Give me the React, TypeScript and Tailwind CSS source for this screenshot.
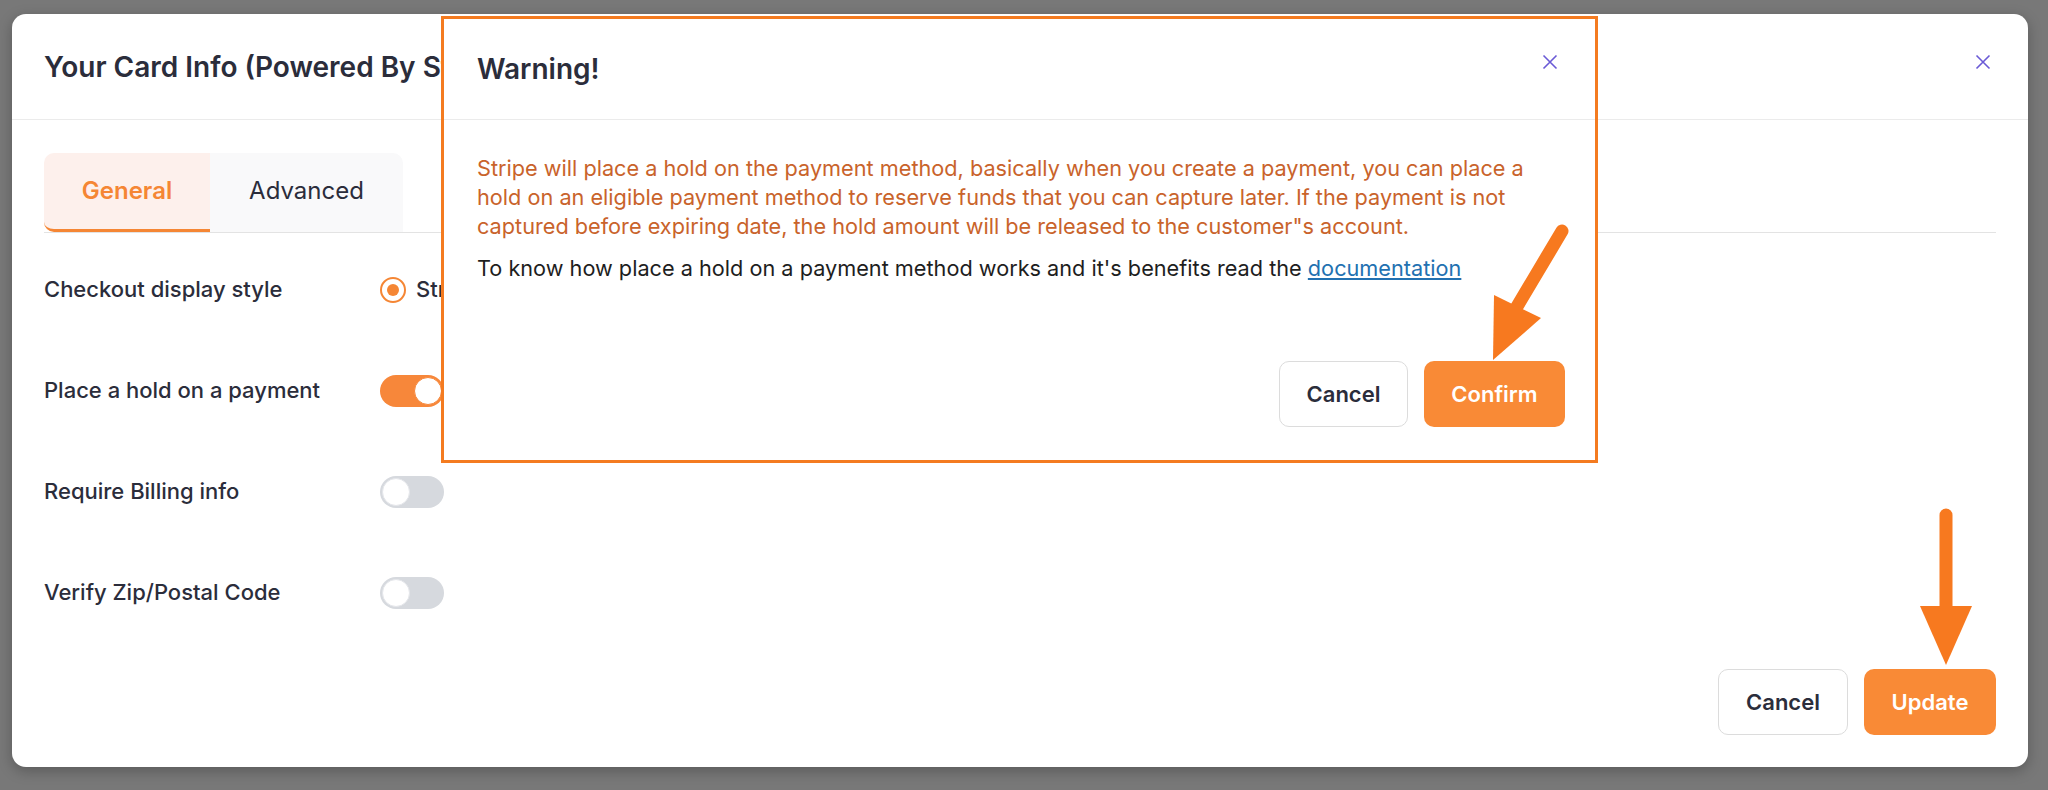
import React from 'react';

const CloseIcon = () => (
  <svg width="16" height="16" viewBox="0 0 16 16" fill="none">
    <path d="M1.5 1.5L14.5 14.5M14.5 1.5L1.5 14.5" stroke="#6a5ad6" strokeWidth="1.6" />
  </svg>
);

const Toggle = ({ on }: { on?: boolean }) => (
  <div
    className={`flex h-[32px] w-[64px] items-center rounded-full px-[2px] ${
      on ? 'justify-end bg-[#f7873a]' : 'justify-start bg-[#d6d9de]'
    }`}
  >
    <span
      className={`block h-[28px] w-[28px] rounded-full border bg-white ${
        on ? 'border-[#f7873a]' : 'border-[#e4e6ea]'
      }`}
    />
  </div>
);

const SettingRow = ({ label, children }: { label: string; children: React.ReactNode }) => (
  <div className="flex h-[101px] items-center">
    <div className="w-[336px] text-[22px] font-medium text-[#2b2d3b]">{label}</div>
    <div className="flex items-center">{children}</div>
  </div>
);

const WarningDialog = () => (
  <div className="absolute left-[441px] top-[16px] flex h-[447px] w-[1157px] flex-col border-[3px] border-[#f47b20] bg-white">
    {/* Header */}
    <div className="flex h-[101px] items-center justify-between border-b border-[#ebebeb] pl-[33px] pr-[37px]">
      <h2 className="text-[28px] font-semibold text-[#2b2d3b]">Warning!</h2>
      <span className="mb-[14px]">
        <CloseIcon />
      </span>
    </div>

    {/* Body */}
    <div className="pl-[33px] pr-[30px] pt-[34px]">
      <p className="text-[21.7px] leading-[29px] text-[#c9632b]">
        Stripe will place a hold on the payment method, basically when you create a payment, you can place a
        <br />
        hold on an eligible payment method to reserve funds that you can capture later. If the payment is not
        <br />
        captured before expiring date, the hold amount will be released to the customer&quot;s account.
      </p>
      <p className="mt-[13px] text-[21.7px] leading-[29px] text-[#1e1e1e]">
        To know how place a hold on a payment method works and it's benefits read the{' '}
        <a href="#" className="text-[#2271b1] underline">
          documentation
        </a>
      </p>
      <div className="mt-[78px] flex justify-end gap-[16px]">
        <button
          type="button"
          className="h-[66px] w-[129px] rounded-[10px] border border-[#dcdcdc] bg-white text-[22px] font-semibold text-[#2b2d3b]"
        >
          Cancel
        </button>
        <button
          type="button"
          className="h-[66px] w-[141px] rounded-[10px] bg-[#f98a36] text-[22px] font-semibold text-white"
        >
          Confirm
        </button>
      </div>
    </div>
  </div>
);

export default function App() {
  return (
    <div className="relative h-[790px] w-[2048px] overflow-hidden bg-[#787878] pl-[12px] pt-[14px] font-['Inter',sans-serif]">
      {/* Card info modal */}
      <div className="flex h-[753px] w-[2016px] flex-col rounded-[14px] bg-white shadow-[0_4px_14px_rgba(0,0,0,0.25)]">
        <div className="flex h-[106px] shrink-0 items-center justify-between border-b border-[#ebebeb] pl-[32px] pr-[37px]">
          <h1 className="text-[28px] font-semibold text-[#2b2d3b]">Your Card Info (Powered By Stripe)</h1>
          <span className="mb-[10px]">
            <CloseIcon />
          </span>
        </div>

        <div className="px-[32px] pt-[33px]">
          {/* Tabs */}
          <div className="flex border-b border-[#e3e3e3]">
            <div className="flex h-[79px] w-[166px] items-center justify-center rounded-l-[10px] border-b-[3px] border-[#f58634] bg-[#fdf0ec] text-[24px] font-semibold text-[#f58634]">
              General
            </div>
            <div className="flex h-[79px] w-[193px] items-center justify-center rounded-tr-[10px] bg-[#f9f9fa] pb-[3px] text-[24px] text-[#2b2d3b]">
              Advanced
            </div>
          </div>

          <div className="pt-[6px]">
            <SettingRow label="Checkout display style">
              <span className="flex h-[26px] w-[26px] items-center justify-center rounded-full border-2 border-[#f58634]">
                <span className="block h-[12px] w-[12px] rounded-full bg-[#f58634]" />
              </span>
              <span className="ml-[10px] text-[22px] font-medium text-[#2b2d3b]">Stripe Hosted Checkout</span>
            </SettingRow>
            <SettingRow label="Place a hold on a payment">
              <Toggle on />
            </SettingRow>
            <SettingRow label="Require Billing info">
              <Toggle />
            </SettingRow>
            <SettingRow label="Verify Zip/Postal Code">
              <Toggle />
            </SettingRow>
          </div>
        </div>

        <div className="mt-auto flex justify-end gap-[16px] pb-[32px] pr-[32px]">
          <button
            type="button"
            className="h-[66px] w-[130px] rounded-[10px] border border-[#dcdcdc] bg-white text-[22px] font-semibold text-[#2b2d3b]"
          >
            Cancel
          </button>
          <button
            type="button"
            className="h-[66px] w-[132px] rounded-[10px] bg-[#f98a36] text-[22px] font-semibold text-white"
          >
            Update
          </button>
        </div>
      </div>

      <WarningDialog />

      {/* Annotation arrows */}
      <svg className="pointer-events-none absolute left-0 top-0" width="2048" height="790">
        <line x1="1946" y1="515" x2="1946" y2="612" stroke="#f7791f" strokeWidth="13" strokeLinecap="round" />
        <polygon points="1920,606 1972,606 1946,665" fill="#f7791f" />
        <line x1="1562" y1="231" x2="1515" y2="310" stroke="#f7791f" strokeWidth="13" strokeLinecap="round" />
        <polygon points="1493,360 1494,295 1541,318" fill="#f7791f" />
      </svg>
    </div>
  );
}
